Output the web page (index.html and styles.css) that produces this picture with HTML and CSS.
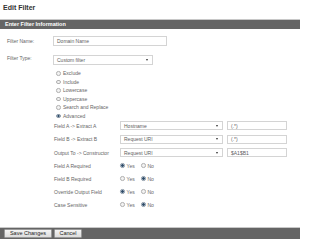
FILE: index.html
```html
<!DOCTYPE html>
<html>
<head>
<meta charset="utf-8">
<title>Edit Filter</title>
<link rel="stylesheet" href="styles.css">
</head>
<body>
<div class="page">
  <h1 class="title">Edit Filter</h1>
  <div class="panel-head">Enter Filter Information</div>
  <div class="form">
    <div class="row name-row">
      <span class="lbl">Filter Name:</span>
      <div class="field w-name">Domain Name</div>
    </div>
    <div class="row type-row">
      <span class="lbl lbl-top">Filter Type:</span>
      <div class="field select w-type">Custom filter<span class="arrow"></span></div>
    </div>
    <ul class="types">
      <li><span class="radio"></span>Exclude</li>
      <li><span class="radio"></span>Include</li>
      <li><span class="radio"></span>Lowercase</li>
      <li><span class="radio"></span>Uppercase</li>
      <li><span class="radio"></span>Search and Replace</li>
      <li><span class="radio on"></span>Advanced</li>
    </ul>
    <div class="adv">
      <div class="adv-row">
        <span class="adv-lbl">Field A -&gt; Extract A</span>
        <div class="field select w-sel">Hostname<span class="arrow"></span></div>
        <div class="field w-txt">(.*)</div>
      </div>
      <div class="adv-row">
        <span class="adv-lbl">Field B -&gt; Extract B</span>
        <div class="field select w-sel">Request URI<span class="arrow"></span></div>
        <div class="field w-txt">(.*)</div>
      </div>
      <div class="adv-row">
        <span class="adv-lbl">Output To -&gt; Constructor</span>
        <div class="field select w-sel">Request URI<span class="arrow"></span></div>
        <div class="field w-txt">$A1$B1</div>
      </div>
    </div>
    <div class="yn">
      <div class="yn-row">
        <span class="adv-lbl">Field A Required</span>
        <span class="opt"><span class="radio on"></span>Yes</span>
        <span class="opt"><span class="radio"></span>No</span>
      </div>
      <div class="yn-row">
        <span class="adv-lbl">Field B Required</span>
        <span class="opt"><span class="radio"></span>Yes</span>
        <span class="opt"><span class="radio on"></span>No</span>
      </div>
      <div class="yn-row">
        <span class="adv-lbl">Override Output Field</span>
        <span class="opt"><span class="radio on"></span>Yes</span>
        <span class="opt"><span class="radio"></span>No</span>
      </div>
      <div class="yn-row">
        <span class="adv-lbl">Case Sensitive</span>
        <span class="opt"><span class="radio"></span>Yes</span>
        <span class="opt"><span class="radio on"></span>No</span>
      </div>
    </div>
  </div>
  <div class="footer">
    <button class="btn">Save Changes</button>
    <button class="btn">Cancel</button>
  </div>
</div>
</body>
</html>
```

FILE: styles.css
```css
* { box-sizing: border-box; }
html, body { margin: 0; padding: 0; background: #fff; }
body { font-family: "Liberation Sans", Arial, sans-serif; color: #666; }

.page {
  width: 300px;
  height: 247px;
  display: flex;
  flex-direction: column;
}

.title {
  margin: 0;
  height: 19px;
  padding: 3px 0 0 3px;
  font-size: 7px;
  line-height: 9px;
  font-weight: bold;
  color: #333;
}

.panel-head {
  height: 10px;
  border-top: 1px solid #c8c8c8;
  background: #656565;
  color: #fff;
  font-size: 5.5px;
  font-weight: bold;
  line-height: 9px;
  padding-left: 5px;
}

.form {
  font-size: 5px;
  color: #666;
}

.row {
  display: flex;
  align-items: center;
}
.name-row { margin-top: 7px; height: 10px; }
.type-row { margin-top: 9px; height: 10px; }

.lbl {
  width: 53px;
  padding-left: 7px;
}
.lbl-top { align-self: flex-start; }

.field {
  position: relative;
  height: 100%;
  border: 1px solid #d4d4d4;
  background: #fff;
  padding-left: 3px;
  display: flex;
  align-items: center;
  color: #606060;
}
.w-name { width: 114px; }
.w-type { width: 100px; }

.arrow {
  position: absolute;
  right: 4px;
  top: 50%;
  margin-top: -1px;
  width: 0;
  height: 0;
  border-left: 1.5px solid transparent;
  border-right: 1.5px solid transparent;
  border-top: 2px solid #333;
}

.types {
  list-style: none;
  margin: 4px 0 0 0;
  padding: 0 0 0 56px;
}
.types li {
  height: 8.5px;
  display: flex;
  align-items: center;
}

.radio {
  display: inline-block;
  width: 4.5px;
  height: 4.5px;
  border-radius: 50%;
  border: 0.7px solid #b0b0b0;
  background: #f2f2f2;
  margin-right: 2.5px;
  flex: none;
}
.radio.on {
  background: radial-gradient(circle, #2f4a66 0 45%, #8fa6bc 65%, #dfe7ee 100%);
  border-color: #8a98a6;
}

.adv {
  margin-top: 1px;
  display: flex;
  flex-direction: column;
  gap: 4.5px;
}
.adv-row {
  display: flex;
  align-items: center;
  height: 9px;
}
.adv-lbl {
  width: 120px;
  padding-left: 54px;
  flex: none;
}
.w-sel { width: 103px; margin-right: 4px; }
.w-txt { width: 60px; }

.yn {
  margin-top: 4px;
  display: flex;
  flex-direction: column;
  gap: 4px;
}
.yn-row {
  display: flex;
  align-items: center;
  height: 9px;
}
.opt {
  display: flex;
  align-items: center;
  width: 21px;
}
.opt:first-of-type { margin-left: 2px; }
.opt .radio { margin-right: 2px; }

.footer {
  margin-top: auto;
  margin-bottom: 8px;
  height: 12px;
  border-top: 1px solid #c8c8c8;
  background: #656565;
  display: flex;
  align-items: center;
  padding-left: 4px;
  gap: 2px;
}
.btn {
  font-family: "Liberation Sans", Arial, sans-serif;
  font-size: 5.5px;
  color: #222;
  height: 9px;
  line-height: 7px;
  padding: 0 4px;
  background: linear-gradient(#f4f4f4, #dcdcdc);
  border: 1px solid #999;
  border-radius: 1px;
}
.btn:first-child { width: 48px; }
.btn:last-child { width: 28px; }
```
